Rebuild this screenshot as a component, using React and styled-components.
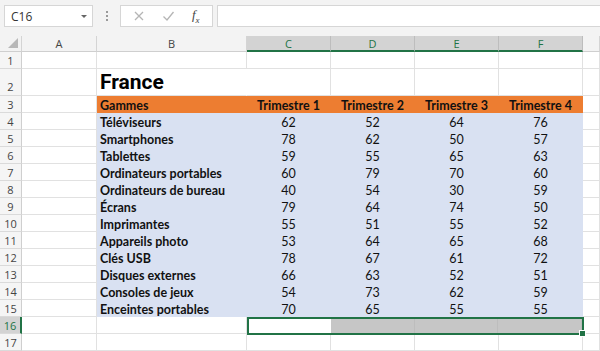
import React from "react";
import styled, { createGlobalStyle, css } from "styled-components";

const Global = createGlobalStyle`
  html, body { margin: 0; padding: 0; background: #fff; }
  body { width: 600px; height: 351px; overflow: hidden; }
`;

const Page = styled.div`
  width: 600px;
  height: 351px;
  display: flex;
  flex-direction: column;
  font-family: Lato, "Open Sans", sans-serif;
`;

const Toolbar = styled.div`
  height: 36px;
  box-sizing: border-box;
  background: #f3f3f3;
  display: flex;
  align-items: flex-start;
  padding: 5px 0 0 4px;
`;

const NameBox = styled.div`
  width: 89px;
  height: 22px;
  box-sizing: border-box;
  background: #fff;
  border: 1px solid #d6d6d6;
  display: flex;
  align-items: center;
  justify-content: space-between;
  padding: 0 5px 0 6px;
  font-family: "Open Sans", sans-serif;
  font-size: 12px;
  color: #333;
`;

const Caret = styled.span`
  width: 0;
  height: 0;
  border-left: 3px solid transparent;
  border-right: 3px solid transparent;
  border-top: 3px solid #666;
`;

const Dots = styled.div`
  width: 27px;
  height: 22px;
  display: flex;
  flex-direction: column;
  align-items: center;
  justify-content: center;
  gap: 2px;
  span {
    width: 2px;
    height: 2px;
    background: #9a9a9a;
  }
`;

const FxBox = styled.div`
  width: 93px;
  height: 22px;
  box-sizing: border-box;
  background: #fff;
  border: 1px solid #d6d6d6;
  display: flex;
  align-items: center;
  justify-content: space-around;
  padding: 0 4px;
`;

const Fx = styled.span`
  font-family: "Liberation Serif", serif;
  font-style: italic;
  font-size: 13px;
  color: #444;
  sub { font-size: 9px; }
`;

const FormulaInput = styled.div`
  flex: 1;
  height: 22px;
  margin-left: 4px;
  box-sizing: border-box;
  background: #fff;
  border: 1px solid #d6d6d6;
  border-right: none;
`;

const Sheet = styled.div`
  display: grid;
  grid-template-columns: 22px 75px 150px repeat(4, 84px) 1fr;
  grid-template-rows: 16px 17px 27px repeat(15, 17px);
`;

const Corner = styled.div`
  box-sizing: border-box;
  background: #f3f3f3;
  border-right: 1px solid #d4d4d4;
  border-bottom: 1px solid #cfcfcf;
  position: relative;
  &::after {
    content: "";
    position: absolute;
    right: 3px;
    bottom: 3px;
    width: 0;
    height: 0;
    border-left: 10px solid transparent;
    border-bottom: 10px solid #b8b8b8;
  }
`;

const ColHead = styled.div`
  box-sizing: border-box;
  display: flex;
  align-items: center;
  justify-content: center;
  font-family: "Open Sans", sans-serif;
  font-size: 11px;
  color: #444;
  background: #f3f3f3;
  border-right: 1px solid #d4d4d4;
  border-bottom: 1px solid #cfcfcf;
  ${(p) =>
    p.$active &&
    css`
      background: #d3d3d3;
      color: #217346;
      border-right-color: #bdbdbd;
      border-bottom: 2px solid #217346;
      padding-top: 1px;
    `}
`;

const RowHead = styled.div`
  box-sizing: border-box;
  display: flex;
  align-items: center;
  justify-content: center;
  font-family: "Open Sans", sans-serif;
  font-size: 11px;
  color: #444;
  background: #f5f5f5;
  border-right: 1px solid #cfcfcf;
  border-bottom: 1px solid #dadada;
  padding-top: ${(p) => (p.$tall ? "8px" : "1px")};
  ${(p) =>
    p.$active &&
    css`
      background: #d3d3d3;
      color: #217346;
      border-right: 2px solid #217346;
    `}
`;

const fills = {
  none: { bg: "#fff", line: "#e1e1e1" },
  orange: { bg: "#ed7d31", line: "#ed7d31" },
  blue: { bg: "#d9e1f2", line: "#d9e1f2" },
};

const Cell = styled.div`
  box-sizing: border-box;
  display: flex;
  align-items: center;
  justify-content: ${(p) => (p.$align === "left" ? "flex-start" : "center")};
  padding: ${(p) => (p.$align === "left" ? "2px 3px 0" : "2px 0 0")};
  background: ${(p) => fills[p.$fill || "none"].bg};
  border-right: 1px solid ${(p) => fills[p.$fill || "none"].line};
  border-bottom: 1px solid ${(p) => fills[p.$fill || "none"].line};
  font-family: Lato, "Open Sans", sans-serif;
  font-size: 12.5px;
  font-weight: ${(p) => (p.$bold ? 700 : 400)};
  color: #111;
  white-space: nowrap;
  overflow: visible;
`;

const Title = styled.div`
  box-sizing: border-box;
  display: flex;
  align-items: flex-end;
  padding: 0 0 1px 3px;
  border-right: 1px solid #fff;
  border-bottom: 1px solid #e1e1e1;
  font-family: Roboto, "Liberation Sans", sans-serif;
  font-weight: 700;
  font-size: 21px;
  color: #000;
`;

const Selection = styled.div`
  grid-column: 4 / span 4;
  position: relative;
  box-sizing: border-box;
  border: 2px solid #217346;
  display: grid;
  grid-template-columns: 82px repeat(3, 1fr);
  z-index: 1;
  margin-bottom: -1px;
  margin-right: -1px;
`;

const SelCell = styled.div`
  background: ${(p) => (p.$active ? "#fff" : "#c6c6c6")};
  border-right: 1px solid ${(p) => (p.$active ? "#fff" : "#bdbdbd")};
  &:last-child { border-right: none; }
`;

const Handle = styled.div`
  position: absolute;
  right: -4px;
  bottom: -4px;
  width: 5px;
  height: 5px;
  background: #217346;
  border: 1px solid #fff;
`;

const data = [
  ["Téléviseurs", 62, 52, 64, 76],
  ["Smartphones", 78, 62, 50, 57],
  ["Tablettes", 59, 55, 65, 63],
  ["Ordinateurs portables", 60, 79, 70, 60],
  ["Ordinateurs de bureau", 40, 54, 30, 59],
  ["Écrans", 79, 64, 74, 50],
  ["Imprimantes", 55, 51, 55, 52],
  ["Appareils photo", 53, 64, 65, 68],
  ["Clés USB", 78, 67, 61, 72],
  ["Disques externes", 66, 63, 52, 51],
  ["Consoles de jeux", 54, 73, 62, 59],
  ["Enceintes portables", 70, 65, 55, 55],
];

const cols = ["A", "B", "C", "D", "E", "F", ""];

function EmptyCells({ n }) {
  return Array.from({ length: n }, (_, i) => <Cell key={i} />);
}

export default function App() {
  return (
    <Page>
      <Global />
      <Toolbar>
        <NameBox>
          C16
          <Caret />
        </NameBox>
        <Dots>
          <span />
          <span />
          <span />
        </Dots>
        <FxBox>
          <svg width="12" height="12" viewBox="0 0 12 12">
            <path d="M2 2 L10 10 M10 2 L2 10" stroke="#b5b5b5" strokeWidth="1.3" fill="none" />
          </svg>
          <svg width="13" height="12" viewBox="0 0 13 12">
            <path d="M1.5 6.5 L5 10 L11.5 2" stroke="#b5b5b5" strokeWidth="1.3" fill="none" />
          </svg>
          <Fx>
            f<sub>x</sub>
          </Fx>
        </FxBox>
        <FormulaInput />
      </Toolbar>
      <Sheet>
        <Corner />
        {cols.map((c, i) => (
          <ColHead key={i} $active={i >= 2 && i <= 5}>
            {c}
          </ColHead>
        ))}

        <RowHead>1</RowHead>
        <EmptyCells n={7} />

        <RowHead $tall>2</RowHead>
        <Cell />
        <Title>France</Title>
        <EmptyCells n={5} />

        <RowHead>3</RowHead>
        <Cell />
        <Cell $fill="orange" $bold $align="left">Gammes</Cell>
        {[1, 2, 3, 4].map((q) => (
          <Cell key={q} $fill="orange" $bold>
            Trimestre {q}
          </Cell>
        ))}
        <Cell />

        {data.map((row, r) => (
          <React.Fragment key={r}>
            <RowHead>{r + 4}</RowHead>
            <Cell />
            <Cell $fill="blue" $bold $align="left">
              {row[0]}
            </Cell>
            {row.slice(1).map((v, i) => (
              <Cell key={i} $fill="blue">
                {v}
              </Cell>
            ))}
            <Cell />
          </React.Fragment>
        ))}

        <RowHead $active>16</RowHead>
        <Cell />
        <Cell />
        <Selection>
          <SelCell $active />
          <SelCell />
          <SelCell />
          <SelCell />
          <Handle />
        </Selection>
        <Cell />

        <RowHead>17</RowHead>
        <EmptyCells n={7} />
      </Sheet>
    </Page>
  );
}
